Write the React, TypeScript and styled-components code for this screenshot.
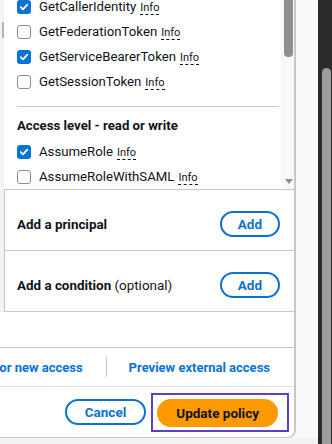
import React, { useLayoutEffect, useRef } from "react";
import styled, { createGlobalStyle } from "styled-components";

const GlobalStyle = createGlobalStyle`
  html, body { margin: 0; padding: 0; background: #fafafa; }
  body {
    font-family: Roboto, "Open Sans", Arial, sans-serif;
    color: #0f141a;
  }
  * { box-sizing: border-box; }
`;

type Action = { name: string; checked?: boolean };
type Group = { title: string; actions: Action[] };

const groups: Group[] = [
  {
    title: "Access level - read",
    actions: [
      { name: "DecodeAuthorizationMessage" },
      { name: "GetAccessKeyInfo" },
      { name: "GetCallerIdentity", checked: true },
      { name: "GetFederationToken" },
      { name: "GetServiceBearerToken", checked: true },
      { name: "GetSessionToken" },
    ],
  },
  {
    title: "Access level - read or write",
    actions: [
      { name: "AssumeRole", checked: true },
      { name: "AssumeRoleWithSAML" },
      { name: "AssumeRoleWithWebIdentity" },
      { name: "SetSourceIdentity" },
    ],
  },
];

const Screen = styled.div`
  display: flex;
  width: 332px;
  height: 444px;
  overflow: hidden;
`;

const Stage = styled.div`
  flex: 1;
  min-width: 0;
  display: flex;
  flex-direction: column;
  background: #fafafa;
`;

const StageRow = styled.div`
  display: flex;
  height: 438px;
  flex-shrink: 0;
`;

const Shade = styled.div`
  flex: 1;
  background: #f2f2f3;
`;

const Modal = styled.div`
  width: 296px;
  flex-shrink: 0;
  display: flex;
  flex-direction: column;
  background: #fff;
  border-right: 2px solid #c6c6cd;
  border-bottom: 1px solid #c6c6cd;
  border-bottom-right-radius: 8px;
`;

const Editor = styled.div`
  display: flex;
  height: 312px;
`;

const Gutter = styled.div`
  width: 4px;
  flex-shrink: 0;
  background: #f3f3f4;
  padding-top: 22px;
`;

const GutterThumb = styled.div`
  width: 2px;
  height: 16px;
  margin-left: 2px;
  background: #b4b4b8;
`;

const EditorMain = styled.div`
  flex: 1;
  min-width: 0;
  display: flex;
  flex-direction: column;
`;

const ListBox = styled.div`
  display: flex;
  height: 190px;
  border-bottom: 1px solid #c6c6cd;
`;

const ListScroll = styled.div`
  flex: 1;
  min-width: 0;
  overflow: hidden;
  padding: 4px 2px 0 13px;
`;

const GroupTitle = styled.div`
  font-size: 13.2px;
  font-weight: 700;
  line-height: 20px;
  margin-bottom: 3px;
`;

const Divider = styled.div`
  height: 1px;
  background: #c6c6cd;
  margin: 12px 0 9px;
`;

const Row = styled.label`
  display: flex;
  align-items: center;
  height: 25px;
  gap: 8px;
  white-space: nowrap;
`;

const Box = styled.span<{ $checked?: boolean }>`
  width: 14px;
  height: 14px;
  flex-shrink: 0;
  border-radius: 3px;
  display: flex;
  align-items: center;
  justify-content: center;
  background: ${(p) => (p.$checked ? "#0972d3" : "#fff")};
  border: ${(p) => (p.$checked ? "none" : "1.5px solid #8c8c94")};
`;

const Label = styled.span`
  font-size: 13.2px;
  line-height: 18px;
`;

const Info = styled.span`
  font-size: 11px;
  line-height: 13px;
  margin-left: 4px;
  border-bottom: 1px dashed #0f141a;
`;

const Track = styled.div`
  width: 13px;
  flex-shrink: 0;
  background: #f9f9f9;
  display: flex;
  flex-direction: column;
  align-items: center;
  justify-content: space-between;
  padding-bottom: 5px;
`;

const TrackThumb = styled.div`
  width: 9px;
  height: 57px;
  margin-left: 2px;
  border-radius: 0 0 4px 4px;
  background: #8f8f8f;
`;

const TrackArrow = styled.div`
  width: 0;
  height: 0;
  margin-left: 2px;
  border-left: 4px solid transparent;
  border-right: 4px solid transparent;
  border-top: 5px solid #8f8f8f;
`;

const Section = styled.div`
  display: flex;
  align-items: center;
  justify-content: space-between;
  padding: 21px 14px 13px 12px;
  border-left: 1px solid #c6c6cd;
  border-bottom: 1px solid #c6c6cd;
`;

const SectionTitle = styled.div`
  font-size: 13.4px;
  font-weight: 700;
  white-space: nowrap;

  span {
    font-weight: 400;
  }
`;

const OutlineButton = styled.button<{ $wide?: boolean }>`
  height: 26px;
  padding: 0 ${(p) => (p.$wide ? 18 : 16)}px;
  border: 2px solid #0972d3;
  border-radius: 20px;
  background: #fff;
  color: #0972d3;
  font-family: inherit;
  font-size: 13.5px;
  font-weight: 700;
  line-height: 18px;
  cursor: pointer;
`;

const Spacer = styled.div`
  height: 35px;
`;

const LinkBar = styled.div`
  display: flex;
  align-items: center;
  justify-content: flex-end;
  height: 40px;
  padding-right: 24px;
  border-top: 1px solid #c6c6cd;
  border-bottom: 1px solid #e3e3e7;
  white-space: nowrap;
`;

const LinkText = styled.a`
  font-size: 13px;
  font-weight: 700;
  color: #0972d3;
  text-decoration: none;
`;

const LinkSep = styled.span`
  width: 1px;
  height: 20px;
  margin: 0 22px 0 23px;
  background: #c6c6cd;
  flex-shrink: 0;
`;

const ButtonBar = styled.div`
  flex: 1;
  display: flex;
  align-items: center;
  justify-content: flex-end;
  gap: 5px;
  padding-right: 5px;
`;

const FocusRing = styled.span`
  display: flex;
  border: 2px solid #5f3dc4;
  padding: 4px 9px 3px 4px;
`;

const PrimaryButton = styled.button`
  height: 28px;
  padding: 0 19px;
  border: none;
  border-radius: 20px;
  background: #ff9900;
  color: #0f141a;
  font-family: inherit;
  font-size: 13.5px;
  font-weight: 700;
  cursor: pointer;
`;

const WindowBar = styled.div`
  width: 14px;
  flex-shrink: 0;
  background: #2b2b2b;
  padding: 68px 1px 0 4px;
`;

const WindowThumb = styled.div`
  height: 100%;
  border-radius: 5px 5px 0 0;
  background: #9d9d9d;
`;

function Check() {
  return (
    <svg width="10" height="10" viewBox="0 0 10 10">
      <path
        d="M1.8 5.2 L4 7.4 L8.3 2.6"
        fill="none"
        stroke="#fff"
        strokeWidth="1.8"
        strokeLinecap="round"
        strokeLinejoin="round"
      />
    </svg>
  );
}

function ActionRow({ action }: { action: Action }) {
  return (
    <Row>
      <Box $checked={action.checked}>{action.checked && <Check />}</Box>
      <Label>
        {action.name}
        <Info>Info</Info>
      </Label>
    </Row>
  );
}

export default function App() {
  const listRef = useRef<HTMLDivElement>(null);

  // the action list is shown scrolled down to GetCallerIdentity
  useLayoutEffect(() => {
    if (listRef.current) listRef.current.scrollTop = 83;
  }, []);

  return (
    <>
      <GlobalStyle />
      <Screen>
        <Stage>
          <StageRow>
            <Modal>
              <Editor>
                <Gutter>
                  <GutterThumb />
                </Gutter>
                <EditorMain>
                  <ListBox>
                    <ListScroll ref={listRef}>
                      {groups.map((group, i) => (
                        <div key={group.title}>
                          {i > 0 && <Divider />}
                          <GroupTitle>{group.title}</GroupTitle>
                          {group.actions.map((a) => (
                            <ActionRow key={a.name} action={a} />
                          ))}
                        </div>
                      ))}
                    </ListScroll>
                    <Track>
                      <TrackThumb />
                      <TrackArrow />
                    </Track>
                  </ListBox>
                  <Section>
                    <SectionTitle>Add a principal</SectionTitle>
                    <OutlineButton>Add</OutlineButton>
                  </Section>
                  <Section>
                    <SectionTitle>
                      Add a condition <span>(optional)</span>
                    </SectionTitle>
                    <OutlineButton>Add</OutlineButton>
                  </Section>
                </EditorMain>
              </Editor>
              <Spacer />
              <LinkBar>
                <LinkText>Check for new access</LinkText>
                <LinkSep />
                <LinkText>Preview external access</LinkText>
              </LinkBar>
              <ButtonBar>
                <OutlineButton $wide>Cancel</OutlineButton>
                <FocusRing>
                  <PrimaryButton>Update policy</PrimaryButton>
                </FocusRing>
              </ButtonBar>
            </Modal>
            <Stage />
          </StageRow>
          <Shade />
        </Stage>
        <WindowBar>
          <WindowThumb />
        </WindowBar>
      </Screen>
    </>
  );
}
